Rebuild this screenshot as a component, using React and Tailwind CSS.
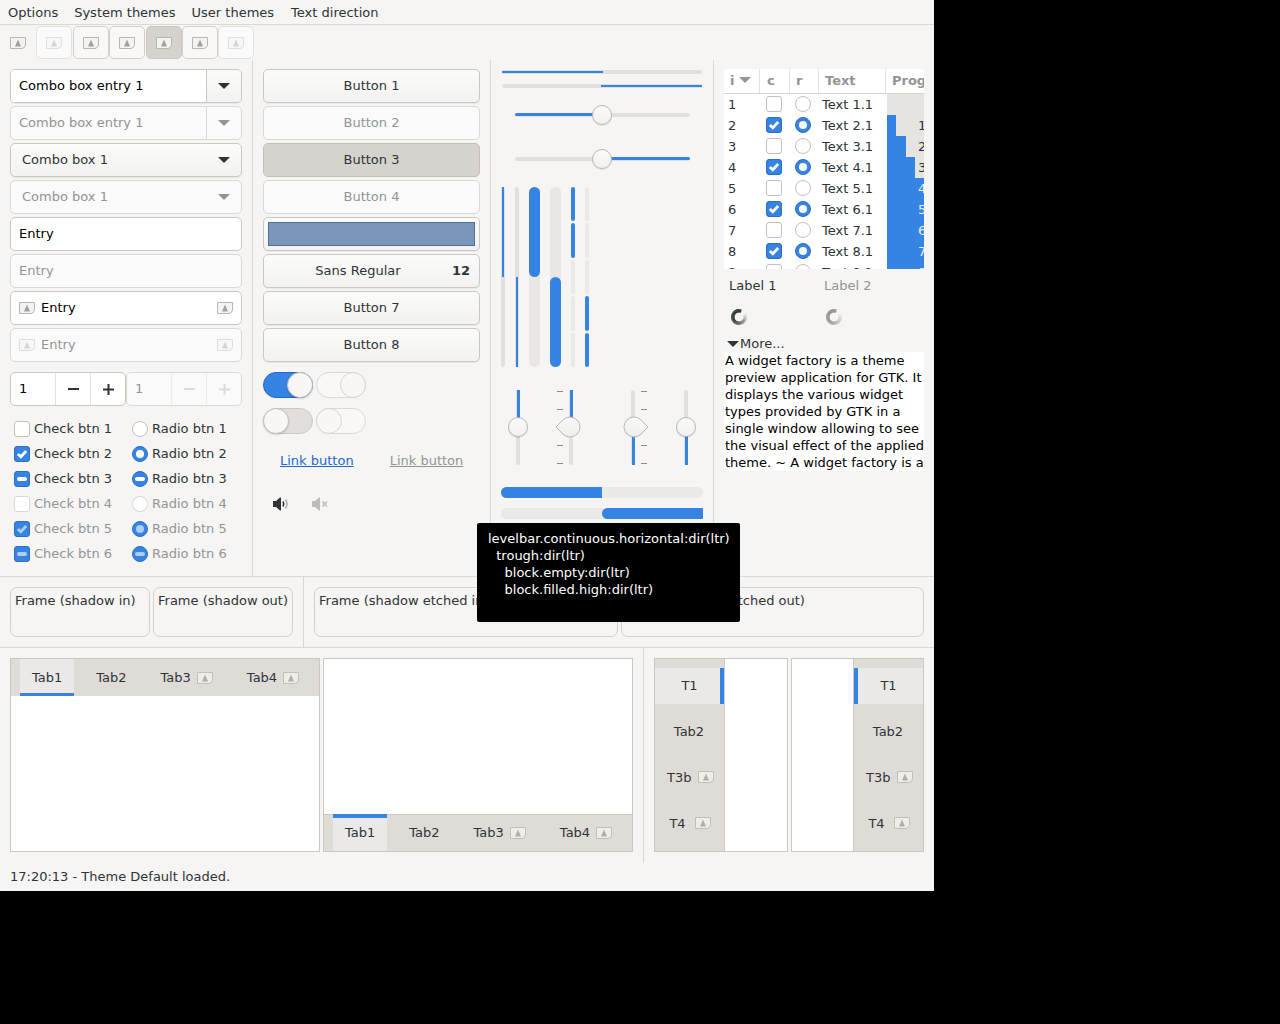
import React from 'react';

const MissingIcon = ({ faded, soft }) => (
  <svg width="16" height="16" viewBox="0 0 16 16" className={`shrink-0 ${faded ? 'opacity-40' : ''} ${soft ? 'opacity-75' : ''}`}>
    <path d="M0.5 2.5H15.5V10Q15 13 12 13.5H0.5Z" fill="#f4f3f1" stroke="#b9b6b1" />
    <path d="M8 4.5L11 11.5H5Z" fill="#a3a09b" />
  </svg>
);

const Arrow = ({ faded }) => (
  <svg width="12" height="6" viewBox="0 0 12 6" className="shrink-0">
    <path d="M0 0H12L6.5 5.6Q6 6 5.5 5.6Z" fill={faded ? '#929595' : '#2e3436'} />
  </svg>
);

const Check = ({ state, faded }) => {
  if (state === 'off') {
    return <span className={`block size-4 shrink-0 rounded-[3px] border bg-white ${faded ? 'border-[#dcd8d4]' : 'border-[#c5bfba]'}`} />;
  }
  return (
    <span className="flex size-4 shrink-0 items-center justify-center rounded-[3px] border border-[#2a6fc4] bg-[#3584e4]">
      {state === 'on' ? (
        <svg width="12" height="12" viewBox="0 0 12 12" className={faded ? 'opacity-60' : ''}>
          <path d="M1.8 6L4.8 8.8L10.2 3" fill="none" stroke="#fff" strokeWidth="2.8" />
        </svg>
      ) : (
        <span className={`block h-[4px] w-[10px] rounded-full bg-white ${faded ? 'opacity-60' : ''}`} />
      )}
    </span>
  );
};

const Radio = ({ state, faded }) => {
  if (state === 'off') {
    return <span className={`block size-4 shrink-0 rounded-full border bg-white ${faded ? 'border-[#dcd8d4]' : 'border-[#c5bfba]'}`} />;
  }
  return (
    <span className="flex size-4 shrink-0 items-center justify-center rounded-full border border-[#2a6fc4] bg-[#3584e4]">
      {state === 'on' ? (
        <span className={`block size-[8px] rounded-full bg-white ${faded ? 'opacity-60' : ''}`} />
      ) : (
        <span className={`block h-[4px] w-[10px] rounded-full bg-white ${faded ? 'opacity-60' : ''}`} />
      )}
    </span>
  );
};

const Combo = ({ label, entry, faded }) => (
  <div className={`flex h-[34px] w-[232px] items-center overflow-hidden rounded-[5px] border ${faded ? 'border-[#dcd8d4] bg-[#fafafa] text-[#929595]' : 'border-[#cdc7c2] shadow-[0_1px_1px_rgba(0,0,0,0.06)]'} ${!faded && !entry ? 'bg-linear-to-b from-[#fbfbfa] to-[#f3f2f1] text-[#2e3436]' : ''} ${!faded && entry ? 'text-black' : ''}`}>
    {entry ? (
      <div className={`flex h-full w-[196px] items-center border-r pb-[2px] pl-[8px] ${faded ? 'border-[#dcd8d4]' : 'border-[#cdc7c2] bg-white'}`}>{label}</div>
    ) : (
      <div className="w-[196px] pb-[2px] pl-[11px]">{label}</div>
    )}
    <div className={`flex h-full flex-1 items-center justify-center ${!faded && entry ? 'bg-linear-to-b from-[#fbfbfa] to-[#f3f2f1]' : ''}`}>
      <Arrow faded={faded} />
    </div>
  </div>
);

const Entry = ({ faded, icons }) => (
  <div className={`flex h-[34px] w-[232px] items-center rounded-[5px] border px-[8px] ${faded ? 'border-[#dcd8d4] bg-[#fafafa] text-[#929595]' : 'border-[#cdc7c2] bg-white text-black'}`}>
    {icons && <MissingIcon faded={faded} />}
    <span className={`flex-1 pb-[2px] ${icons ? 'pl-[6px]' : ''}`}>Entry</span>
    {icons && <MissingIcon faded={faded} />}
  </div>
);

const Spin = ({ faded }) => (
  <div className={`flex h-[34px] w-[116px] items-center rounded-[5px] border ${faded ? 'border-[#dcd8d4] bg-[#fafafa] text-[#929595]' : 'border-[#cdc7c2] bg-white text-black'}`}>
    <span className="w-[44px] pb-[2px] pl-[8px]">1</span>
    <span className={`flex h-full w-[35px] items-center justify-center border-l ${faded ? 'border-[#eeecea]' : 'border-[#e3e0dd]'}`}>
      <span className={`block h-[2px] w-[11px] ${faded ? 'bg-[#dedcd9]' : 'bg-[#2e3436]'}`} />
    </span>
    <span className={`flex h-full w-[35px] items-center justify-center border-l ${faded ? 'border-[#eeecea]' : 'border-[#e3e0dd]'}`}>
      <svg width="11" height="11" viewBox="0 0 11 11"><path d="M0 5.5H11M5.5 0V11" stroke={faded ? '#dedcd9' : '#2e3436'} strokeWidth="2" /></svg>
    </span>
  </div>
);

const Button = ({ children, faded, pressed }) => (
  <div className={`flex h-[34px] w-[217px] items-center justify-center rounded-[5px] border ${pressed ? 'border-[#c5bfba] bg-[#d6d3ce] text-[#2e3436]' : faded ? 'border-[#dcd8d4] bg-[#fafafa] text-[#929595]' : 'border-[#cdc7c2] bg-linear-to-b from-[#fbfbfa] to-[#f3f2f1] text-[#2e3436] shadow-[0_1px_1px_rgba(0,0,0,0.06)]'}`}>
    {typeof children === 'string' ? <span className="pb-[2px]">{children}</span> : children}
  </div>
);

const Switch = ({ on, faded }) => {
  const track = faded ? 'border-[#dcd8d4] bg-[#f9f8f7]' : on ? 'border-[#1b6acb] bg-[#3584e4]' : 'border-[#cdc7c2] bg-[#e1dedb]';
  return (
    <div className={`flex h-[26px] w-[50px] rounded-full border ${on ? 'justify-end' : 'justify-start'} ${track}`}>
      <span className={`-m-px block size-[26px] rounded-full border bg-[#f8f7f6] ${faded ? 'border-[#d8d4d0]' : 'border-[#c5bfba] shadow-[0_1px_2px_rgba(0,0,0,0.15)]'}`} />
    </div>
  );
};

const Handle = ({ className }) => (
  <span className={`absolute block size-[20px] rounded-full border border-[#bcb7b1] bg-linear-to-b from-[#fbfbfa] to-[#f1f0ee] shadow-[0_1px_1px_rgba(0,0,0,0.1)] ${className}`} />
);

const HThin = ({ reverse }) => (
  <div className={`flex h-[4px] w-[200px] rounded-full bg-[#e2e0dd] ${reverse ? 'justify-end' : ''}`}>
    <span className="mt-px block h-[2px] w-[101px] bg-[#3584e4]" />
  </div>
);

const HScale = ({ reverse }) => (
  <div className="flex w-[200px] justify-center">
    <div className={`relative flex h-[4px] w-[175px] rounded-full bg-[#e2e0dd] ${reverse ? 'justify-end' : ''}`}>
      <span className="block h-[3px] w-[87px] rounded-full bg-[#3584e4]" />
      <Handle className="top-[-8px] left-[77px]" />
    </div>
  </div>
);

const VBar = ({ wide, reverse }) => (
  <div className={`flex h-[180px] flex-col rounded-full ${wide ? 'w-[11px] bg-[#e9e7e4]' : 'w-[4px] bg-[#e2e0dd]'} ${reverse ? 'justify-end' : ''}`}>
    <span className={`block h-[90px] bg-[#3584e4] ${wide ? 'w-[11px] rounded-full' : 'ml-px w-[2px]'}`} />
  </div>
);

const Segments = ({ filled }) => (
  <div className="flex h-[180px] w-[4px] flex-col gap-[2px]">
    {[0, 1, 2, 3, 4].map((i) => (
      <span key={i} className={`block w-[4px] flex-1 rounded-full ${filled.includes(i) ? 'bg-[#3584e4]' : 'bg-[#ebe9e6]'}`} />
    ))}
  </div>
);

const Marks = ({ side }) => (
  <div className={`absolute top-px flex flex-col ${side === 'left' ? 'left-[-4px]' : 'right-[-4px]'}`}>
    <span className="block h-px w-[6px] bg-[#8f8c88]" />
    <span className="mt-[17px] block h-px w-[6px] bg-[#8f8c88]" />
    <span className="mt-[35px] block h-px w-[6px] bg-[#8f8c88]" />
    <span className="mt-[17px] block h-px w-[6px] bg-[#8f8c88]" />
  </div>
);

const Teardrop = ({ side }) => (
  <svg width="26" height="22" viewBox="0 0 26 22" className={`absolute top-[26px] ${side === 'left' ? 'left-[-6px]' : 'right-[-6px]'}`}>
    <defs>
      <linearGradient id={`drop-${side}`} x1="0" y1="0" x2="0" y2="1">
        <stop offset="0" stopColor="#fbfbfa" />
        <stop offset="1" stopColor="#eeedeb" />
      </linearGradient>
    </defs>
    <path
      d={side === 'left' ? 'M1 11L7.93 3.93A10 10 0 1 1 7.93 18.07Z' : 'M25 11L18.07 3.93A10 10 0 1 0 18.07 18.07Z'}
      fill={`url(#drop-${side})`}
      stroke="#bcb7b1"
    />
  </svg>
);

const VScale = ({ reverse, side }) => (
  <div className="relative flex h-[75px] w-[20px] justify-center">
    <div className={`flex h-[75px] w-[4px] flex-col rounded-full bg-[#e2e0dd] ${reverse ? 'justify-end' : ''}`}>
      <span className="ml-px block h-[37px] w-[3px] bg-[#3584e4]" />
    </div>
    {side ? <><Marks side={side} /><Teardrop side={side} /></> : <Handle className="top-[27px] left-0" />}
  </div>
);

const LevelBar = ({ reverse }) => (
  <div className={`flex h-[11px] w-[202px] rounded-[6px] bg-[#ebe9e6] ${reverse ? 'justify-end' : ''}`}>
    <span className={`block h-[11px] w-[101px] bg-[#3584e4] ${reverse ? 'rounded-l-[6px] rounded-r-[1px]' : 'rounded-l-[6px]'}`} />
  </div>
);

const Spinner = ({ faded }) => (
  <svg width="18" height="18" viewBox="0 0 18 18" className={faded ? 'opacity-50' : ''}>
    {Array.from({ length: 36 }).map((_, i) => {
      // dark head near the top, fading counter-clockwise round to the right
      const a1 = -Math.PI / 2.6 - (i / 36) * Math.PI * 1.75;
      const a2 = -Math.PI / 2.6 - ((i + 1.3) / 36) * Math.PI * 1.75;
      return (
        <path
          key={i}
          d={`M${9 + 6.3 * Math.cos(a1)} ${9 + 6.3 * Math.sin(a1)}L${9 + 6.3 * Math.cos(a2)} ${9 + 6.3 * Math.sin(a2)}`}
          stroke="#2e3436"
          strokeWidth="3.4"
          opacity={i < 14 ? 1 : Math.max(0.08, 1 - (i - 14) / 22)}
        />
      );
    })}
  </svg>
);

const rows = [1, 2, 3, 4, 5, 6, 7, 8, 9];
const fills = [0, 9, 19, 28, 37, 37, 37, 37, 37];

const TreeRow = ({ n }) => {
  const on = n % 2 === 0;
  return (
    <div className="flex h-[21px] shrink-0 items-center text-[#2e3436]">
      <span className="w-[42px] pl-[4px]">{n}</span>
      <span className="w-[29px] pb-[2px]"><Check state={on ? 'on' : 'off'} /></span>
      <span className="w-[27px] pb-[2px]"><Radio state={on ? 'on' : 'off'} /></span>
      <span className="w-[65px]">Text {n}.1</span>
      <span className="relative h-[21px] flex-1 overflow-hidden bg-[#e6e4e1]">
        <span className="block h-[21px] bg-[#3584e4]" style={{ width: fills[n - 1] }} />
        <span className={`absolute top-[2px] left-[31px] ${n > 4 ? 'text-[#e8f1fc]' : ''}`}>{n === 1 ? '' : n - 1}</span>
      </span>
    </div>
  );
};

const TopTab = ({ label, icon, active, bottom }) => (
  <div className={`flex items-center px-[12px] text-[#2e3436] ${bottom ? '-mt-px h-[37px]' : 'h-[37px]'} ${active ? (bottom ? 'border-t-[4px] border-[#3584e4] bg-[#ebe9e7] pb-[4px]' : 'border-b-[3px] border-[#3584e4] bg-[#ebe9e7] pt-[3px]') : ''}`}>
    <span>{label}</span>
    {icon && <span className="ml-[6px]"><MissingIcon soft /></span>}
  </div>
);

const SideTab = ({ label, icon, active, right }) => {
  let box = 'pl-[12px] pr-[13px]';
  if (active) {
    box = right ? 'border-l-[4px] border-[#3584e4] bg-[#ebe9e7] pl-[8px] pr-[12px]' : 'border-r-[4px] border-[#3584e4] bg-[#ebe9e7] pl-[12px] pr-[8px]';
  }
  return (
    <div className={`mb-[10px] flex h-[36px] w-full items-center text-[#2e3436] ${box}`}>
      <span className="flex-1 text-center">{label}</span>
      {icon && <span className="ml-[7px]"><MissingIcon soft /></span>}
    </div>
  );
};

const TopTabs = ({ bottom }) => (
  <div className={`flex h-[37px] gap-[10px] bg-[#dfdcd8] pl-[9px] ${bottom ? 'border-t border-[#cdc7c2]' : ''}`}>
    <TopTab label="Tab1" active bottom={bottom} />
    <TopTab label="Tab2" bottom={bottom} />
    <TopTab label="Tab3" icon bottom={bottom} />
    <TopTab label="Tab4" icon bottom={bottom} />
  </div>
);

const SideTabs = ({ right }) => (
  <div className={`flex h-full w-[70px] flex-col bg-[#dfdcd8] pt-[9px] ${right ? 'border-l border-[#cdc7c2]' : 'border-r border-[#cdc7c2]'}`}>
    <SideTab label="T1" active right={right} />
    <SideTab label="Tab2" />
    <SideTab label="T3b" icon />
    <SideTab label="T4" icon />
  </div>
);

const Frame = ({ label, className }) => (
  <div className={`h-[50px] rounded-[7px] border border-[#d5d0cc] pl-[4px] pt-[4px] text-[#2e3436] ${className}`}>{label}</div>
);

const checks = [
  ['off', false], ['on', false], ['mixed', false],
  ['off', true], ['on', true], ['mixed', true],
];

const toolButtons = [
  ['', true], ['ml-px', false], ['', false], ['ml-px', 'pressed'], ['', false], ['', true],
];

export default function App() {
  return (
    <div className="h-[1024px] w-full overflow-hidden bg-black font-['DejaVu_Sans',sans-serif] text-[13px] leading-[17px]">
      <div className="relative h-[891px] w-[934px] bg-[#f6f5f4] text-[#2e3436]">
        {/* menu */}
        <div className="flex h-[25px] items-center gap-[16px] border-b border-[#dcd8d4] pl-[8px]">
          <span>Options</span>
          <span>System themes</span>
          <span>User themes</span>
          <span className="ml-px">Text direction</span>
        </div>

        {/* toolbar */}
        <div className="flex h-[35px] pt-px">
          <div className="flex h-[33px] w-[36px] items-center justify-center"><MissingIcon /></div>
          {toolButtons.map(([gap, v], i) => (
            <div key={i} className={`flex h-[33px] w-[36px] items-center justify-center rounded-[5px] border ${gap} ${v === 'pressed' ? 'border-[#cdc7c2] bg-[#d6d3ce]' : v ? 'border-[#e4e1de] bg-[#fafafa]' : 'border-[#d5d0cc] bg-[#f9f8f7]'}`}>
              <MissingIcon faded={v === true} />
            </div>
          ))}
        </div>

        {/* widgets */}
        <div className="flex h-[517px] border-b border-[#dcd8d4]">
          <div className="w-[253px] border-r border-[#dcd8d4] pl-[10px] pt-[9px]">
            <div className="flex flex-col gap-[3px]">
              <Combo label="Combo box entry 1" entry />
              <Combo label="Combo box entry 1" entry faded />
              <Combo label="Combo box 1" />
              <Combo label="Combo box 1" faded />
              <Entry />
              <Entry faded />
              <Entry icons />
              <Entry icons faded />
            </div>
            <div className="mt-[10px] flex">
              <Spin />
              <Spin faded />
            </div>
            <div className="mt-[10px] grid grid-cols-[118px_1fr] pl-[4px]">
              {checks.map(([state, faded], i) => (
                <React.Fragment key={i}>
                  <div className={`flex h-[25px] items-center gap-[4px] ${faded ? 'text-[#929595]' : ''}`}>
                    <Check state={state} faded={faded} />Check btn {i + 1}
                  </div>
                  <div className={`flex h-[25px] items-center gap-[4px] ${faded ? 'text-[#929595]' : ''}`}>
                    <Radio state={state} faded={faded} />Radio btn {i + 1}
                  </div>
                </React.Fragment>
              ))}
            </div>
          </div>

          <div className="w-[238px] border-r border-[#dcd8d4] pl-[10px] pt-[9px]">
            <div className="flex flex-col gap-[3px]">
              <Button>Button 1</Button>
              <Button faded>Button 2</Button>
              <Button pressed>Button 3</Button>
              <Button faded>Button 4</Button>
              <Button>
                <span className="block h-[24px] w-[207px] border border-[#4f6f94] bg-[#7a97bb]" />
              </Button>
              <Button>
                <span className="flex-1 pb-[2px] text-center">Sans Regular</span>
                <span className="pb-[2px] pr-[9px] font-bold">12</span>
              </Button>
              <Button>Button 7</Button>
              <Button>Button 8</Button>
            </div>
            <div className="mt-[10px] flex gap-[3px]">
              <Switch on />
              <Switch on faded />
            </div>
            <div className="mt-[10px] flex gap-[3px]">
              <Switch />
              <Switch faded />
            </div>
            <div className="ml-[17px] mt-[18px] flex gap-[36px]">
              <span className="text-[#1b6acb] underline">Link button</span>
              <span className="text-[#929595] underline">Link button</span>
            </div>
            <div className="ml-[9px] mt-[27px] flex gap-[21px]">
              <svg width="18" height="16" viewBox="0 0 18 16">
                <path d="M1 5H4L8 1.5H9V14.5H8L4 11H1Z" fill="#2e3436" />
                <path d="M11 5.5Q12.5 8 11 10.5" fill="none" stroke="#2e3436" strokeWidth="1.6" />
                <path d="M13.5 3.5Q16.5 8 13.5 12.5" fill="none" stroke="#a9a8a6" strokeWidth="1.4" />
              </svg>
              <svg width="18" height="16" viewBox="0 0 18 16">
                <path d="M1 5H4L8 1.5H9V14.5H8L4 11H1Z" fill="#bdbcba" />
                <path d="M11.5 5.5L16 10.5M16 5.5L11.5 10.5" stroke="#bdbcba" strokeWidth="1.6" />
              </svg>
            </div>
          </div>

          <div className="w-[223px] border-r border-[#dcd8d4] pl-[11px] pt-[10px]">
            <HThin />
            <div className="mt-[10px]"><HThin reverse /></div>
            <div className="mt-[25px]"><HScale /></div>
            <div className="mt-[40px]"><HScale reverse /></div>
            <div className="ml-[-1px] mt-[26px] flex">
              <div className="mr-[10px]"><VBar /></div>
              <div className="mr-[10px]"><VBar reverse /></div>
              <div className="mr-[10px]"><VBar wide /></div>
              <div className="mr-[10px]"><VBar wide reverse /></div>
              <div className="mr-[10px]"><Segments filled={[0, 1]} /></div>
              <Segments filled={[3, 4]} />
            </div>
            <div className="ml-[6px] mt-[23px] flex">
              <VScale />
              <div className="ml-[33px]"><VScale side="left" /></div>
              <div className="ml-[42px]"><VScale reverse side="right" /></div>
              <div className="ml-[33px]"><VScale reverse /></div>
            </div>
            <div className="ml-[-1px] mt-[22px]"><LevelBar /></div>
            <div className="ml-[-1px] mt-[10px]"><LevelBar reverse /></div>
          </div>

          <div className="w-[220px] pl-[10px] pt-[9px]">
            <div className="flex h-[200px] w-[200px] flex-col overflow-hidden bg-white">
              <div className="flex h-[25px] shrink-0 border-b border-[#d8d4d0] font-bold text-[#929595]">
                <span className="flex w-[36px] items-center gap-[5px] border-r border-[#e3e0dd] pb-[2px] pl-[6px]">i <Arrow faded /></span>
                <span className="flex w-[30px] items-center border-r border-[#e3e0dd] pb-[2px] pl-[7px]">c</span>
                <span className="flex w-[29px] items-center border-r border-[#e3e0dd] pb-[2px] pl-[6px]">r</span>
                <span className="flex w-[67px] items-center border-r border-[#e3e0dd] pb-[2px] pl-[6px]">Text</span>
                <span className="flex flex-1 items-center overflow-hidden pb-[2px] pl-[6px]">Progress</span>
              </div>
              {rows.map((n) => <TreeRow key={n} n={n} />)}
            </div>
            <div className="mt-[8px] flex pl-[5px]">
              <span className="w-[95px]">Label 1</span>
              <span className="text-[#929595]">Label 2</span>
            </div>
            <div className="mt-[14px] flex pl-[6px]">
              <span className="w-[95px]"><Spinner /></span>
              <Spinner faded />
            </div>
            <div className="mt-[9px] flex items-center gap-[1px] pl-[3px]">
              <Arrow />More...
            </div>
            <p className="h-[119px] w-[200px] overflow-hidden bg-white pl-px text-black">
              A widget factory is a theme preview application for GTK. It displays the various widget types provided by GTK in a single window allowing to see the visual effect of the applied theme. ~ A widget factory is a theme preview application for GTK.
            </p>
          </div>
        </div>

        {/* frames */}
        <div className="flex h-[71px] border-b border-[#dcd8d4]">
          <div className="flex w-[304px] gap-[3px] border-r border-[#dcd8d4] pl-[10px] pt-[10px]">
            <Frame label="Frame (shadow in)" className="w-[140px]" />
            <Frame label="Frame (shadow out)" className="w-[140px]" />
          </div>
          <div className="flex gap-[3px] pl-[10px] pt-[10px]">
            <Frame label="Frame (shadow etched in)" className="w-[304px]" />
            <Frame label="Frame (shadow etched out)" className="w-[303px]" />
          </div>
        </div>

        {/* notebooks */}
        <div className="flex h-[215px]">
          <div className="flex w-[644px] gap-[3px] border-r border-[#dcd8d4] pl-[10px] pt-[10px]">
            <div className="flex h-[194px] w-[310px] flex-col border border-[#cdc7c2] bg-white">
              <TopTabs />
            </div>
            <div className="flex h-[194px] w-[310px] flex-col justify-end border border-[#cdc7c2] bg-white">
              <TopTabs bottom />
            </div>
          </div>
          <div className="flex gap-[3px] pl-[10px] pt-[10px]">
            <div className="h-[194px] w-[134px] border border-[#cdc7c2] bg-white"><SideTabs /></div>
            <div className="flex h-[194px] w-[133px] justify-end border border-[#cdc7c2] bg-white"><SideTabs right /></div>
          </div>
        </div>

        {/* status */}
        <div className="pl-[10px] pt-[5px]">17:20:13 - Theme Default loaded.</div>

        <div className="absolute left-[477px] top-[523px] h-[99px] w-[263px] whitespace-pre rounded-[2px] bg-black pl-[11px] pt-[7px] text-white">
          <div>levelbar.continuous.horizontal:dir(ltr)</div>
          <div>{'  '}trough:dir(ltr)</div>
          <div>{'    '}block.empty:dir(ltr)</div>
          <div>{'    '}block.filled.high:dir(ltr)</div>
        </div>
      </div>
    </div>
  );
}
